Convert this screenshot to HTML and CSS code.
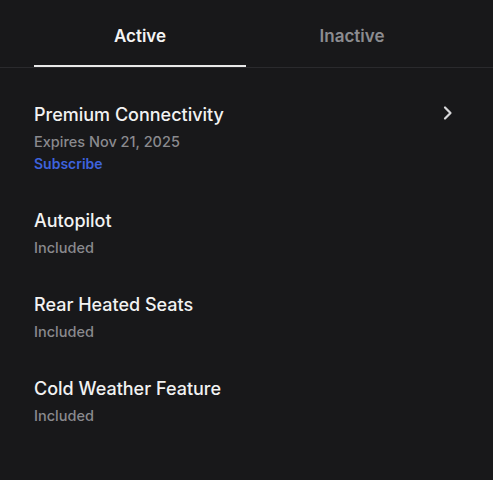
FILE: index.html
```html
<!DOCTYPE html>
<html>
<head>
<meta charset="utf-8">
<link rel="stylesheet" href="styles.css">
</head>
<body>
<div class="page">
  <nav class="tabs">
    <div class="tab active">Active</div>
    <div class="tab">Inactive</div>
  </nav>
  <ul class="list">
    <li class="item">
      <div class="item-text">
        <div class="title">Premium Connectivity</div>
        <div class="sub">Expires Nov 21, 2025</div>
        <a class="link">Subscribe</a>
      </div>
      <svg class="chevron" width="12" height="16" viewBox="0 0 12 16"><path d="M3 2.5 L8.5 8 L3 13.5" fill="none" stroke="#d8d8da" stroke-width="2.2" stroke-linecap="round" stroke-linejoin="round"/></svg>
    </li>
    <li class="item">
      <div class="item-text">
        <div class="title">Autopilot</div>
        <div class="sub">Included</div>
      </div>
    </li>
    <li class="item">
      <div class="item-text">
        <div class="title">Rear Heated Seats</div>
        <div class="sub">Included</div>
      </div>
    </li>
    <li class="item">
      <div class="item-text">
        <div class="title">Cold Weather Feature</div>
        <div class="sub">Included</div>
      </div>
    </li>
  </ul>
</div>
</body>
</html>
```

FILE: styles.css
```css
html, body {
  margin: 0;
  padding: 0;
  background: #18181a;
}
body {
  font-family: Inter, "Noto Sans", sans-serif;
  color: #f2f2f2;
  width: 493px;
  height: 480px;
  overflow: hidden;
}
.page {
  display: flex;
  flex-direction: column;
}
.tabs {
  display: flex;
  padding: 0 35px 0 34px;
  border-bottom: 1px solid #2a2a2d;
}
.tab {
  flex: 1;
  text-align: center;
  font-size: 17px;
  font-weight: 600;
  line-height: 20px;
  padding: 26px 0 19px;
  color: #8c8c90;
  border-bottom: 2px solid transparent;
}
.tab.active {
  color: #f4f4f4;
  border-bottom-color: #e8e8e8;
}
.list {
  list-style: none;
  margin: 0;
  padding: 35px 35px 0 34px;
  display: flex;
  flex-direction: column;
  gap: 35px;
}
.item {
  display: flex;
  justify-content: space-between;
  align-items: flex-start;
}
.item-text {
  display: flex;
  flex-direction: column;
}
.title {
  font-size: 18px;
  font-weight: 500;
  line-height: 24px;
  color: #f2f2f2;
}
.sub {
  font-size: 14.5px;
  font-weight: 500;
  line-height: 20px;
  margin-top: 5px;
  color: #8a8a8e;
}
.link {
  font-size: 14px;
  font-weight: 600;
  line-height: 20px;
  margin-top: 2px;
  color: #3e63dd;
}
.chevron {
  margin-top: 2px;
  margin-right: 4px;
}
```
